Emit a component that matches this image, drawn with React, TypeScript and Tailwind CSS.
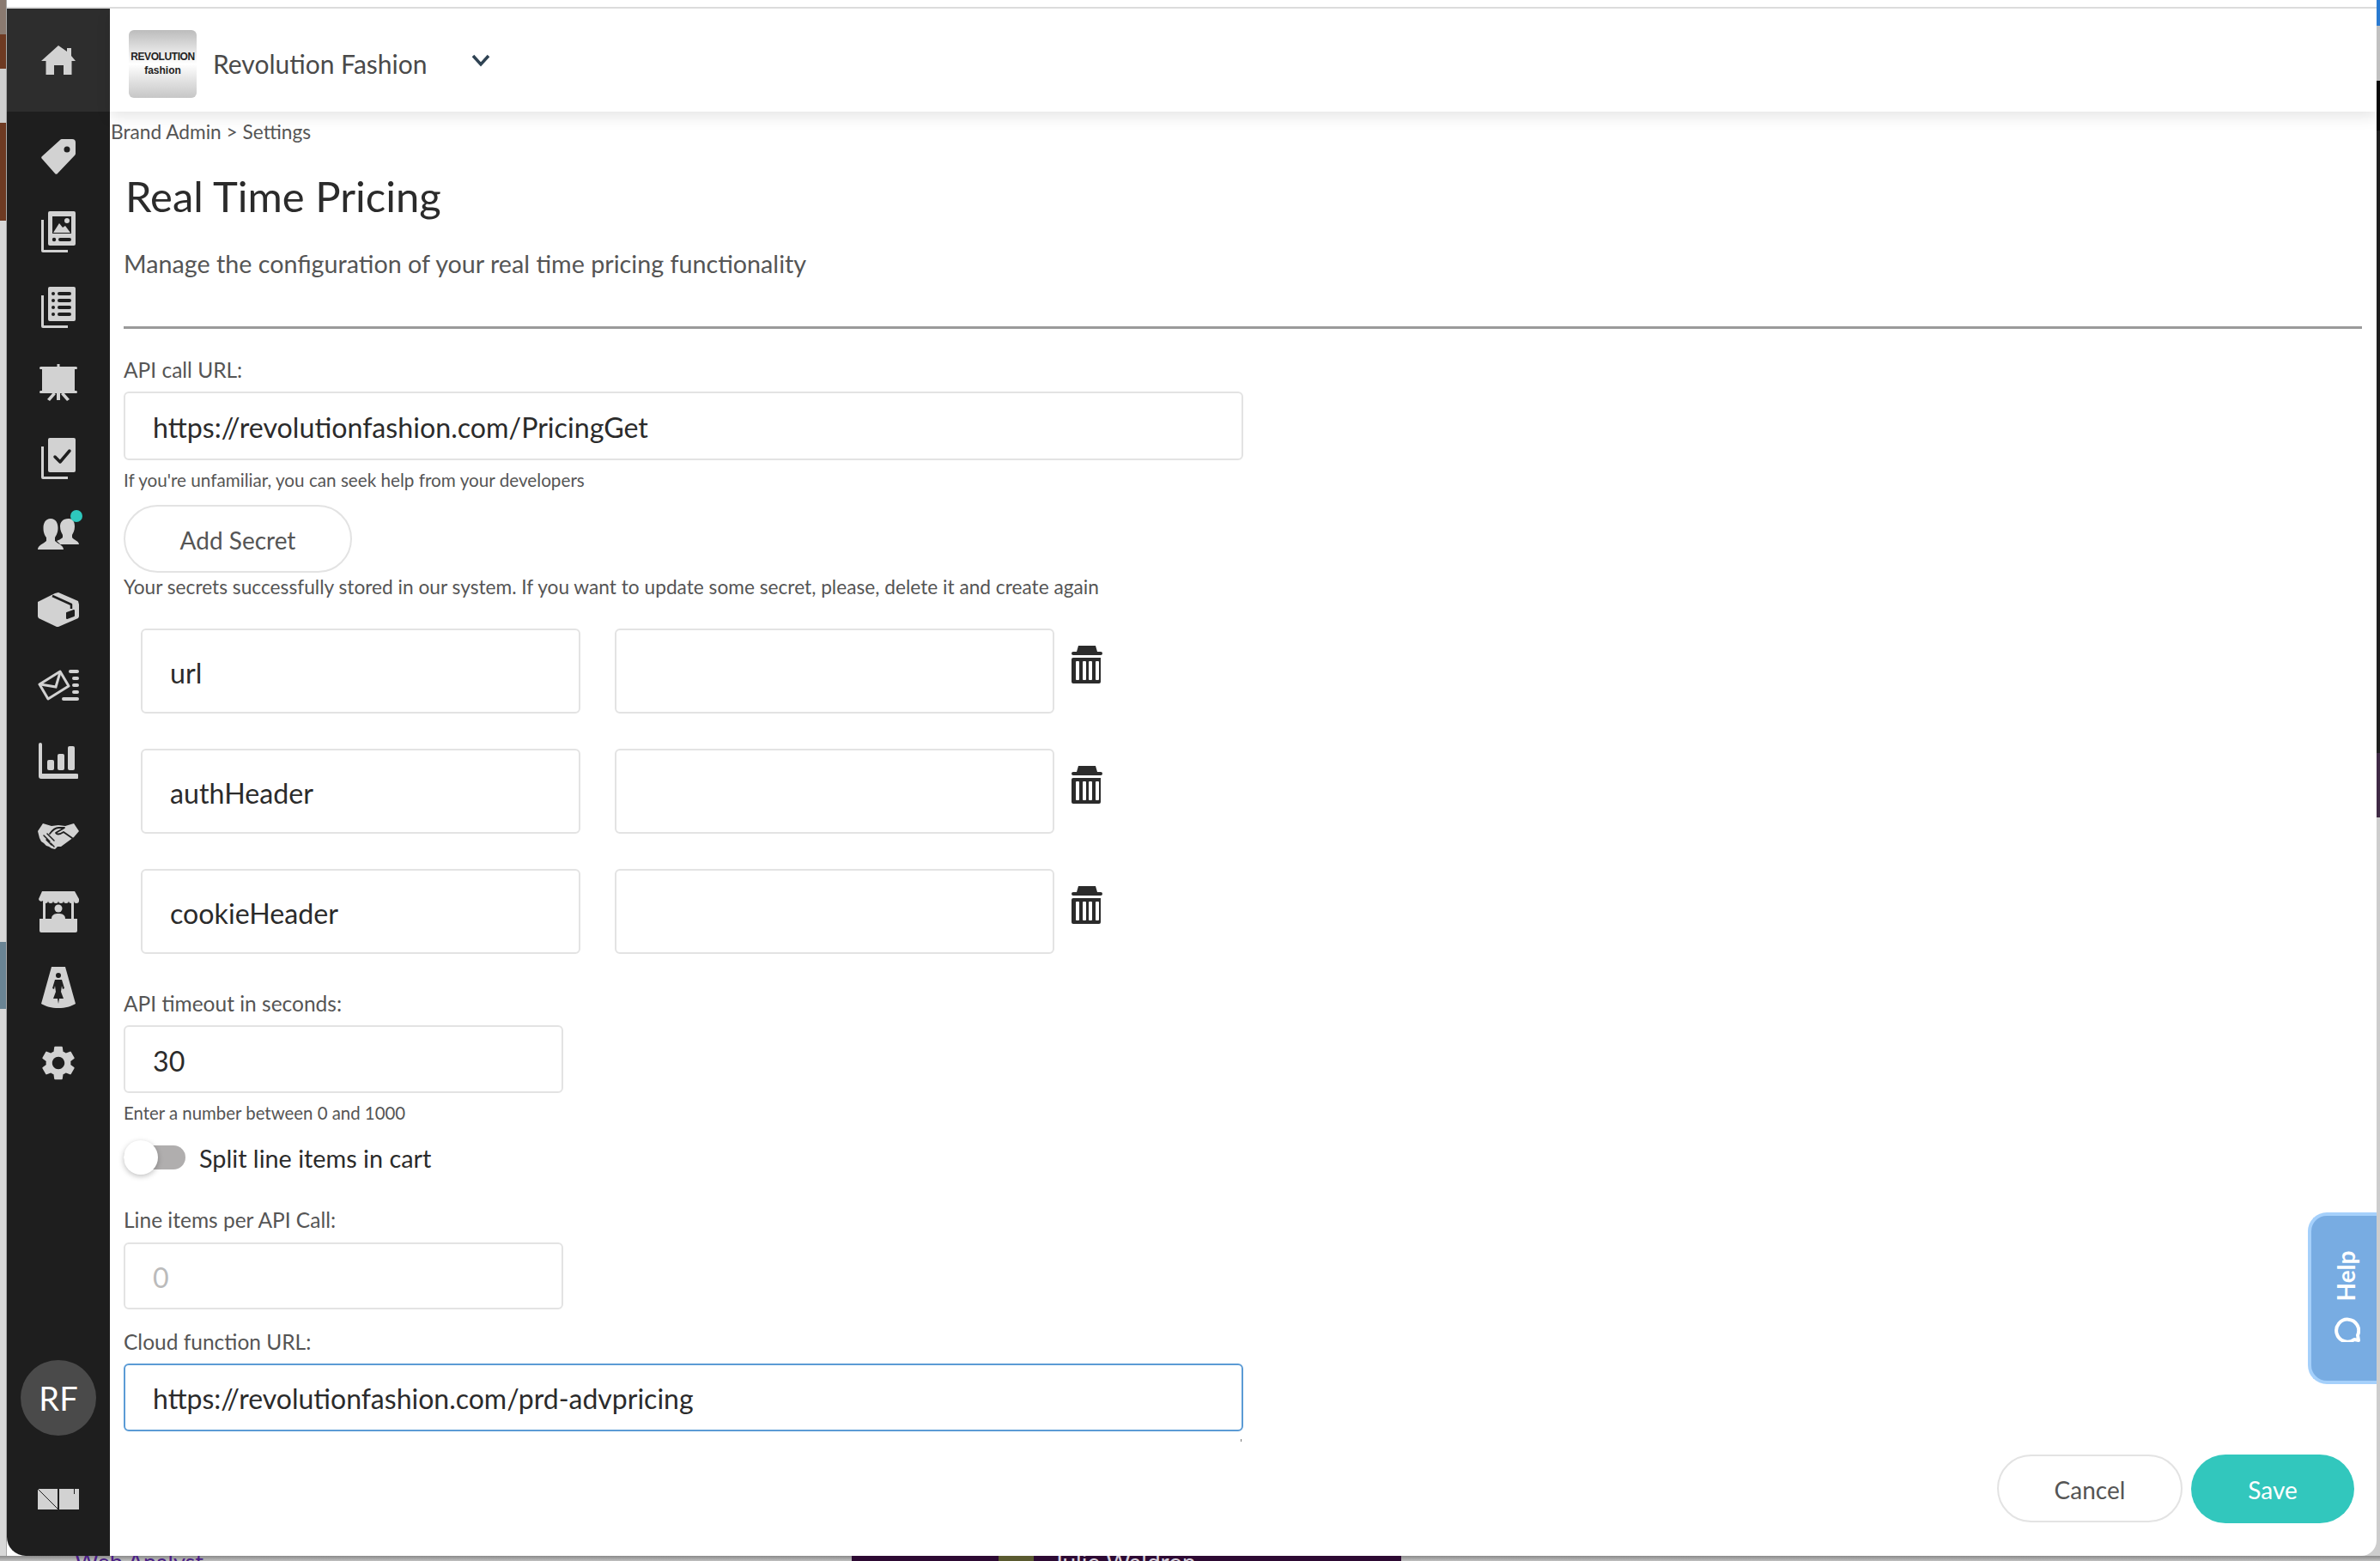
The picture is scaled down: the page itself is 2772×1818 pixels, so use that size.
import { MdSettings } from "react-icons/md";

const ICON = "#d2d2d2";
const DARK = "#1e1e1e";

function HomeIcon() {
  return (
    <svg width="40" height="34" viewBox="0 0 40 34">
      <path d="M20 0l10 7V3h5v9l5 6h-4.500v16H26V23H15v11H5.500V18H0z" fill={ICON} />
    </svg>
  );
}

function TagIcon() {
  return (
    <svg width="40" height="42" viewBox="0 0 40 42">
      <path d="M24 1h12a4 4 0 0 1 4 4v13a3 3 0 0 1-1 2L19 41a2 2 0 0 1-3 0L1 24a2 2 0 0 1 0-3L22 2a3 3 0 0 1 2-1z" fill={ICON} />
      <circle cx="30" cy="13" r="3.500" fill={DARK} />
    </svg>
  );
}

function CatalogIcon() {
  return (
    <svg width="40" height="48" viewBox="0 0 40 48">
      <path d="M0 10h3v35h28v3H2a2 2 0 0 1-2-2z" fill={ICON} />
      <rect x="8" y="0" width="32" height="40" rx="2" fill={ICON} />
      <path d="M13 6h22v20H13z" fill={DARK} />
      <path d="M14 25l7-11 4 5 3-2 6 8z" fill={ICON} />
      <circle cx="30" cy="11" r="3" fill={ICON} />
      <circle cx="15" cy="33" r="2.200" fill={DARK} />
      <rect x="20" y="31" width="15" height="4" rx="2" fill={DARK} />
    </svg>
  );
}

function ListIcon() {
  return (
    <svg width="40" height="48" viewBox="0 0 40 48">
      <path d="M0 10h3v35h28v3H2a2 2 0 0 1-2-2z" fill={ICON} />
      <rect x="8" y="0" width="32" height="40" rx="2" fill={ICON} />
      {[8, 16, 24, 32].map((y) => (
        <g key={y} fill={DARK}>
          <circle cx="14" cy={y} r="2" />
          <rect x="19" y={y - 2} width="16" height="4" rx="2" />
        </g>
      ))}
    </svg>
  );
}

function ScreenIcon() {
  return (
    <svg width="44" height="44" viewBox="0 0 44 44">
      <rect x="20.500" y="0" width="3" height="6" fill={ICON} />
      <rect x="0" y="3" width="44" height="3" rx="1.500" fill={ICON} />
      <rect x="3" y="4" width="38" height="29" fill={ICON} />
      <rect x="0" y="31" width="44" height="3" rx="1.500" fill={ICON} />
      <path d="M20 33h4v9h-4zM16 33l3 2-7 8-3-2zM28 33l-3 2 7 8 3-2z" fill={ICON} />
    </svg>
  );
}

function CheckIcon() {
  return (
    <svg width="40" height="48" viewBox="0 0 40 48">
      <path d="M0 10h3v35h28v3H2a2 2 0 0 1-2-2z" fill={ICON} />
      <rect x="8" y="0" width="32" height="40" rx="2" fill={ICON} />
      <path d="M16 22l6 6 11-13" fill="none" stroke={DARK} strokeWidth="3.500" strokeLinecap="round" strokeLinejoin="round" />
    </svg>
  );
}

function PeopleIcon() {
  return (
    <svg width="48" height="36" viewBox="0 0 48 36">
      <path d="M15 0c6 0 8.500 5 8.500 11 0 6-2.500 9-3.500 11v4c3 3 10 5 10 10H0c0-5 7-7 10-10v-4C8.500 20 6.500 17 6.500 11S9 0 15 0z" fill={ICON} />
      <path d="M36 0c5 0 7 4 7 9 0 5-2 8-3 10v3c2 3 8 4 8 8H26c-1-2-3-3-4-4 2-1 5-2 7-4v-3c-1-2-3-5-3-10s3-9 10-9z" fill={ICON} />
    </svg>
  );
}

function BoxIcon() {
  return (
    <svg width="48" height="40" viewBox="0 0 48 40">
      <path d="M0 11L20 1l4-1 23 10 1 4v14l-1 2-23 10-2 0-21-10-1-2z" fill={ICON} />
      <path d="M17 4l22 10v5" fill="none" stroke={DARK} strokeWidth="2.500" strokeLinejoin="round" />
      <path d="M34 24l8-3v6l-8 3z" fill={DARK} stroke={DARK} strokeWidth="2" strokeLinejoin="round" />
    </svg>
  );
}

function MailIcon() {
  return (
    <svg width="48" height="37" viewBox="0 0 48 37">
      <path d="M2 17L26 2l10 17-24 15z" fill="none" stroke={ICON} strokeWidth="3" strokeLinejoin="round" />
      <path d="M3 17l18 3 5-17" fill="none" stroke={ICON} strokeWidth="3" />
      <rect x="36" y="0" width="12" height="4" rx="2" fill={ICON} />
      <rect x="40" y="8" width="8" height="4" rx="2" fill={ICON} />
      <rect x="40" y="16" width="8" height="4" rx="2" fill={ICON} />
      <rect x="40" y="24" width="8" height="4" rx="2" fill={ICON} />
      <rect x="28" y="32" width="20" height="4" rx="2" fill={ICON} />
    </svg>
  );
}

function ChartIcon() {
  return (
    <svg width="46" height="42" viewBox="0 0 46 42">
      <path d="M0 2a2 2 0 0 1 4 0v34h40a2.500 2.500 0 0 1 0 6H3a3 3 0 0 1-3-3z" fill={ICON} />
      <rect x="10" y="20" width="8" height="12" rx="2" fill={ICON} />
      <rect x="22" y="13" width="8" height="19" rx="2" fill={ICON} />
      <rect x="34" y="4" width="8" height="28" rx="2" fill={ICON} />
    </svg>
  );
}

function HandshakeIcon() {
  return (
    <svg width="48" height="30" viewBox="0 0 48 30">
      <path d="M0 9L6 0l10 3 8-1 8 1 10-3 6 9-6 7-15 11-4 0-3 3-4-1-3-2-3-1-3-3-3-2-2-4z" fill={ICON} />
      <path d="M14 12c3-4 6-7 10-7h7c-3 2-7 4-10 6 2 3 6 1 9-1l10 7" fill="none" stroke={DARK} strokeWidth="1.800" strokeLinecap="round" strokeLinejoin="round" />
      <path d="M7 14l7 7M11 12l8 8M10 19l6 6M15 23l4 4" fill="none" stroke={DARK} strokeWidth="1.500" strokeLinecap="round" />
    </svg>
  );
}

function StandIcon() {
  return (
    <svg width="48" height="48" viewBox="0 0 48 48">
      <path d="M5 0h38l5 9v2a3 3 0 0 1-6 0 3 3 0 0 1-6 0 3 3 0 0 1-6 0 3 3 0 0 1-6 0 3 3 0 0 1-6 0 3 3 0 0 1-6 0 3 3 0 0 1-6 0 3 3 0 0 1-5-2z" fill={ICON} />
      <rect x="6" y="12" width="3" height="20" fill={ICON} />
      <rect x="39" y="12" width="3" height="20" fill={ICON} />
      <circle cx="24" cy="20" r="4.500" fill={ICON} />
      <path d="M16 32c0-5 4-6 8-6s8 1 8 6z" fill={ICON} />
      <path d="M2 32h44v14a2 2 0 0 1-2 2H4a2 2 0 0 1-2-2z" fill={ICON} />
    </svg>
  );
}

function SpotlightIcon() {
  return (
    <svg width="40" height="48" viewBox="0 0 40 48">
      <path d="M12 0h16l12 43c-5 3-12 5-20 5S5 46 0 43z" fill={ICON} />
      <circle cx="20" cy="10" r="3" fill={DARK} />
      <path d="M16 15h8l3 10-2 1-1-4-1 7 3 8h-5l-1 6-1-6h-5l3-8-1-7-1 4-2-1z" fill={DARK} />
    </svg>
  );
}

function NoteIcon() {
  return (
    <svg width="48" height="24" viewBox="0 0 48 24">
      <rect x="0" y="0" width="23" height="24" fill={ICON} />
      <rect x="25" y="0" width="23" height="24" fill={ICON} />
      <path d="M0 0l24 24" stroke={DARK} strokeWidth="1" />
      <path d="M42.500 0v6" stroke={DARK} strokeWidth="1" />
    </svg>
  );
}

function TrashIcon() {
  return (
    <svg width="36" height="44" viewBox="0 0 36 44" className="shrink-0">
      <path d="M8 0h20l2 7h4a2 2 0 0 1 0 4H2a2 2 0 0 1 0-4h4z" fill="#2b2b2b" />
      <path d="M2 14h32a2 2 0 0 1 0 0v28a2 2 0 0 1-2 2H2a2 2 0 0 1-2-2V16a2 2 0 0 1 2-2z" fill="#2b2b2b" />
      {[5, 13, 20, 28].map((x) => (
        <rect key={x} x={x} y="18" width="4" height="22" rx="1" fill="#fff" />
      ))}
    </svg>
  );
}

function NavItem({ children, dot }: { children: React.ReactNode; dot?: boolean }) {
  return (
    <div className="relative flex h-[88px] items-center justify-center">
      {children}
      {dot && <span className="absolute left-[74px] top-4 h-[14px] w-[14px] rounded-full bg-[#2ec8bd]" />}
    </div>
  );
}

function Sidebar() {
  return (
    <aside className="flex w-[120px] shrink-0 flex-col rounded-bl-[22px] bg-[#1e1e1e]">
      <div className="flex h-[120px] items-center justify-center bg-[#2d2d2d]">
        <HomeIcon />
      </div>
      <nav className="pt-2">
        <NavItem><TagIcon /></NavItem>
        <NavItem><CatalogIcon /></NavItem>
        <NavItem><ListIcon /></NavItem>
        <NavItem><ScreenIcon /></NavItem>
        <NavItem><CheckIcon /></NavItem>
        <NavItem dot><PeopleIcon /></NavItem>
        <NavItem><BoxIcon /></NavItem>
        <NavItem><MailIcon /></NavItem>
        <NavItem><ChartIcon /></NavItem>
        <NavItem><HandshakeIcon /></NavItem>
        <NavItem><StandIcon /></NavItem>
        <NavItem><SpotlightIcon /></NavItem>
        <NavItem><MdSettings size={48} color={ICON} /></NavItem>
      </nav>
      <div className="mt-auto flex flex-col items-center pb-[54px]">
        <div className="flex h-[88px] w-[88px] items-center justify-center rounded-full bg-[#4a4a4a] text-[38px] text-white">RF</div>
        <div className="mt-[62px] flex h-6"><NoteIcon /></div>
      </div>
    </aside>
  );
}

function Label({ children }: { children: React.ReactNode }) {
  return <div className="h-7 text-[24.5px] leading-7 text-[#555555]">{children}</div>;
}

function TextBox({ value, className, muted }: { value: string; className: string; muted?: boolean }) {
  return (
    <div className={`flex items-center rounded-md border-2 border-[#e3e3e3] pt-[5px] text-[32.2px] ${muted ? "text-[#bbbbbb]" : "text-[#2b2b2b]"} ${className}`}>
      {value}
    </div>
  );
}

function SecretRow({ name }: { name: string }) {
  return (
    <div className="ml-5 flex gap-10">
      <TextBox value={name} className="h-[99px] w-[512px] pl-8" />
      <div className="flex gap-5">
        <TextBox value="" className="h-[99px] w-[512px]" />
        <div className="pt-5"><TrashIcon /></div>
      </div>
    </div>
  );
}

function HelpTab() {
  return (
    <div className="absolute right-0 top-[1402px] flex h-[200px] w-20 flex-col items-center justify-center gap-[15px] rounded-l-[22px] border-y-4 border-l-4 border-[#a5d0fb] bg-[#78ace2] pl-[5px] text-white">
      <div className="flex h-[60px] w-[30px] items-center justify-center">
        <span className="-rotate-90 whitespace-nowrap text-[28px] font-bold">Help</span>
      </div>
      <svg width="32" height="32" viewBox="0 0 32 32" className="mb-[6px]">
        <path d="M30 30l-5-1a13 13 0 1 1 4-5z" fill="none" stroke="#fff" strokeWidth="4" strokeLinejoin="round" />
      </svg>
    </div>
  );
}

function LeftStrip() {
  return (
    <div className="flex w-2 shrink-0 flex-col border-r border-[#a8a8a8] bg-[#d8d8d8]">
      <div className="h-10 bg-[#8a7a70]" />
      <div className="h-10 bg-[#6e3a22]" />
      <div className="h-[63px] bg-[#cfcfcf]" />
      <div className="h-[114px] bg-[#6e3a22]" />
      <div className="mt-[840px] h-[78px] bg-[#6a8494]" />
    </div>
  );
}

function RightStrip() {
  return (
    <div className="flex w-1 shrink-0 flex-col bg-[#cdcdcd]">
      <div className="h-[30px] bg-[#2a7ad0]" />
      <div className="h-16 bg-[#c0c0c0]" />
      <div className="h-[58px] bg-[#0a0a0a]" />
      <div className="h-[725px] bg-[#1e1e1e]" />
      <div className="h-[75px] bg-[#3f2a45]" />
    </div>
  );
}

export default function App() {
  return (
    <div className="flex h-[1818px] w-[2772px] flex-col overflow-hidden bg-[#cdcdcd] font-['Lato',sans-serif]">
      <div className="flex min-h-0 flex-1">
        <LeftStrip />
        <div className="flex min-w-0 flex-1 flex-col">
          <div className="h-2 shrink-0 bg-white" />
          <div className="h-0.5 shrink-0 bg-[#dcdcdc]" />
          <div className="flex min-h-0 flex-1 overflow-hidden rounded-br-[18px] bg-white">
            <Sidebar />
            <main className="relative min-w-0 flex-1">
              <header className="flex h-[120px] items-center bg-white pl-[22px] pt-2 shadow-[0_6px_16px_rgba(0,0,0,0.10)]">
                <div className="flex h-[79px] w-[79px] flex-col items-center justify-center rounded-md bg-gradient-to-b from-[#bcbcbc] via-white to-[#c6c6c6] font-['Liberation_Sans',sans-serif] font-bold leading-[16px] text-[#222222]">
                  <span className="text-[12px] tracking-[-0.4px]">REVOLUTION</span>
                  <span className="text-[12px]">fashion</span>
                </div>
                <span className="ml-[19px] text-[30px] text-[#4a4a4a]">Revolution Fashion</span>
                <svg width="22" height="15" viewBox="0 0 22 15" className="mb-2 ml-[51px]">
                  <path d="M2 2l9 10 9-10" fill="none" stroke="#2f4353" strokeWidth="3.500" />
                </svg>
              </header>

              <div className="mt-[9px] pl-px text-[22.7px] leading-[30px] text-[#555555]">Brand Admin &gt; Settings</div>

              <div className="pl-4 pr-[17px]">
                <h1 className="ml-[2px] mt-[30px] text-[49px] leading-[58px] text-[#2b2b2b]">Real Time Pricing</h1>
                <p className="mt-[34px] text-[28.7px] leading-8 text-[#555555]">Manage the configuration of your real time pricing functionality</p>
                <div className="mt-[57px] h-[3px] bg-[#9a9a9a]" />

                <div className="mt-[34px]"><Label>API call URL:</Label></div>
                <TextBox value="https://revolutionfashion.com/PricingGet" className="mt-[11px] h-20 w-[1304px] pl-8" />
                <div className="mt-[11px] h-6 text-[20.7px] leading-6 text-[#555555]">If you're unfamiliar, you can seek help from your developers</div>
                <button className="mt-[17px] block h-[79px] w-[266px] rounded-full border-2 border-[#e3e3e3] pt-[2px] text-[28px] text-[#555555]">Add Secret</button>
                <div className="mt-[5px] h-6 text-[22.7px] leading-6 text-[#555555]">Your secrets successfully stored in our system. If you want to update some secret, please, delete it and create again</div>

                <div className="mt-9 flex flex-col gap-[41px]">
                  <SecretRow name="url" />
                  <SecretRow name="authHeader" />
                  <SecretRow name="cookieHeader" />
                </div>

                <div className="mt-[44px]"><Label>API timeout in seconds:</Label></div>
                <TextBox value="30" className="mt-[11px] h-[79px] w-[512px] pl-8" />
                <div className="mt-[11px] h-6 text-[20.4px] leading-6 text-[#555555]">Enter a number between 0 and 1000</div>

                <div className="mt-5 flex h-10 items-center">
                  <div className="relative h-7 w-[72px] rounded-full bg-[#b0aeae]">
                    <span className="absolute -top-[6px] left-0 h-10 w-10 rounded-full bg-white shadow-[0_2px_6px_rgba(0,0,0,0.25)]" />
                  </div>
                  <span className="ml-4 pt-[3px] text-[28.8px] text-[#2b2b2b]">Split line items in cart</span>
                </div>

                <div className="mt-[39px]"><Label>Line items per API Call:</Label></div>
                <TextBox value="0" muted className="mt-3 h-[78px] w-[512px] pl-8" />

                <div className="mt-6"><Label>Cloud function URL:</Label></div>
                <div className="relative mt-[11px] flex h-[79px] w-[1304px] items-center rounded-md border-2 border-[#5b9bd5] pl-8 pt-[3px] text-[32px] text-[#2b2b2b]">
                  https://revolutionfashion.com/prd-advpricing
                  <span className="absolute -bottom-[14px] right-0 h-[3px] w-px bg-[#777777]" />
                </div>

                <div className="mt-[27px] flex justify-end gap-[10px] pr-[9px]">
                  <button className="h-[79px] w-[216px] rounded-full border-2 border-[#e3e3e3] pt-[2px] text-[28px] text-[#555555]">Cancel</button>
                  <button className="h-20 w-[190px] rounded-full bg-[#32c7bd] pt-[2px] text-[28px] text-white">Save</button>
                </div>
              </div>

              <HelpTab />
            </main>
          </div>
        </div>
        <RightStrip />
      </div>

      <div className="flex h-[6px] shrink-0 overflow-hidden bg-gradient-to-b from-[#8a8a8a] to-[#c0c0c0]">
        <div className="ml-[87px] w-[905px] text-[27px] leading-[14px] text-[#4b1e86]">Web Analyst</div>
        <div className="flex w-[640px] bg-[#2d0a33] text-[28px] leading-[14px] text-[#d8d0dc]">
          <div className="ml-[171px] w-[41px] bg-[#5a5a30]" />
          <div className="ml-[22px]">Julie Waldron</div>
        </div>
      </div>
    </div>
  );
}
